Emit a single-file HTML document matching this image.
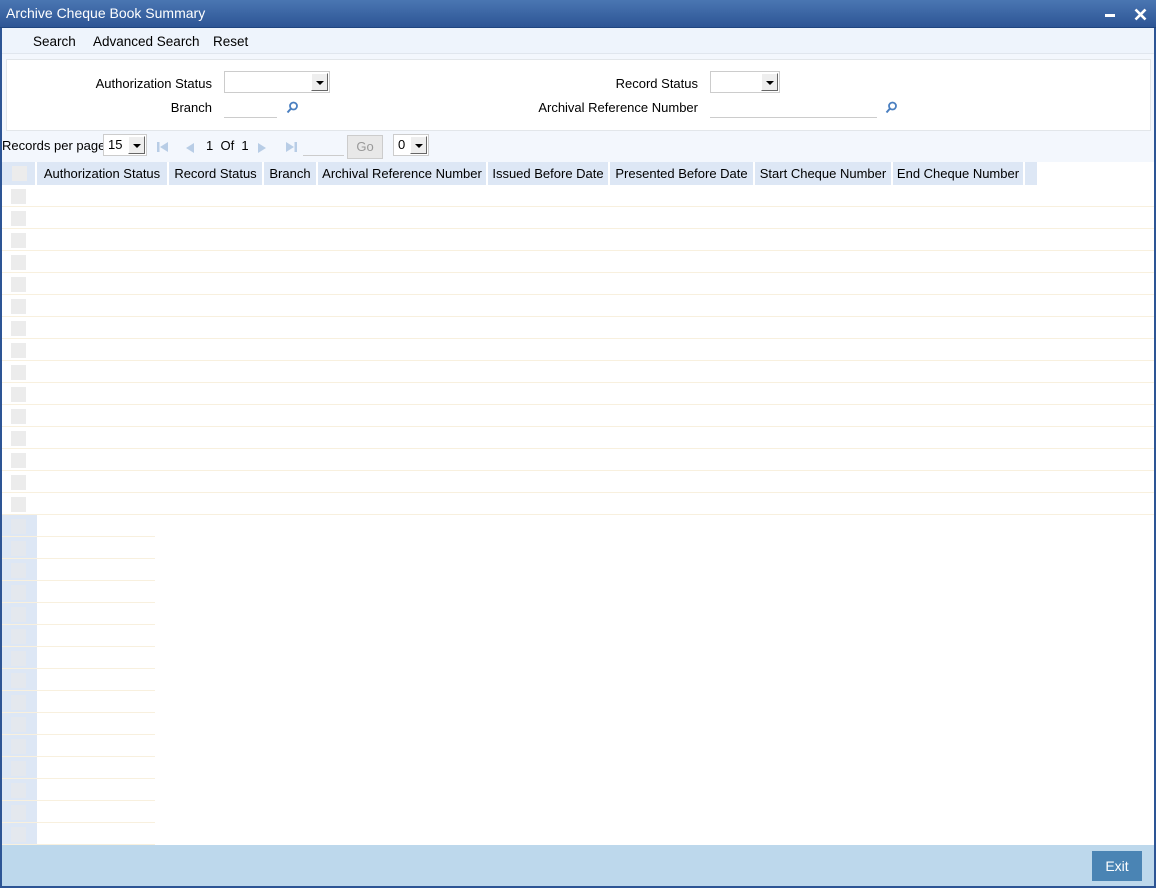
<!DOCTYPE html>
<html><head><meta charset="utf-8"><style>
*{margin:0;padding:0;box-sizing:border-box}
body{width:1156px;height:888px;position:relative;background:#fff;font-family:"Liberation Sans",Arial,sans-serif;font-size:13px;color:#000;overflow:hidden}
.a{position:absolute}
.t{white-space:nowrap}
.sel{position:absolute;height:22px;border:1px solid #ccc;background:#fff}
.sel i{position:absolute;right:1px;top:1px;width:17px;height:18px;background:#eee;border:1px solid #999;border-color:#fff #666 #666 #fff}
.sel i:after{content:"";position:absolute;left:4px;top:7px;border-left:4px solid transparent;border-right:4px solid transparent;border-top:4px solid #000}
.line{position:absolute;height:1px;background:#ccc}
.hd{position:absolute;top:162px;height:23px;background:#dde7f5;border-right:2px solid #fff;line-height:23px;text-align:center;overflow:hidden}
.cb{position:absolute;width:15px;height:15px;background:#ececec}
</style></head><body>
<div class="a" style="left:0;top:0;width:1156px;height:28px;background:linear-gradient(#4a76b2,#2d5595);border-bottom:1px solid #1f4580"></div>
<div class="a t" style="left:6px;top:5px;color:#fff;font-size:14px">Archive Cheque Book Summary</div>
<div class="a" style="left:1105px;top:14px;width:10px;height:3px;background:#fff"></div>
<svg class="a" style="left:1134px;top:8px" width="13" height="13"><path d="M1.5 1.5L11.5 11.5M11.5 1.5L1.5 11.5" stroke="#fff" stroke-width="2.6"/></svg>
<div class="a" style="left:0;top:28px;width:2px;height:860px;background:#2d5595"></div>
<div class="a" style="left:1154px;top:28px;width:2px;height:860px;background:#2d5595"></div>
<div class="a" style="left:2px;top:28px;width:1152px;height:26px;background:#eef4fc;border-bottom:1px solid #e0e6ee"></div>
<div class="a t" style="left:33px;top:34px;font-size:13.5px">Search</div>
<div class="a t" style="left:93px;top:34px;font-size:13.5px">Advanced Search</div>
<div class="a t" style="left:213px;top:34px;font-size:13.5px">Reset</div>
<div class="a" style="left:2px;top:54px;width:1152px;height:108px;background:#f3f7fd"></div>
<div class="a" style="left:6px;top:59px;width:1145px;height:72px;background:#fff;border:1px solid #e2e6ea"></div>
<div class="a t" style="left:94px;top:76px;width:118px;text-align:right">Authorization Status</div>
<div class="sel" style="left:224px;top:71px;width:106px"><i></i></div>
<div class="a t" style="left:112px;top:100px;width:100px;text-align:right">Branch</div>
<div class="line" style="left:224px;top:117px;width:53px"></div>
<svg class="a" style="left:286px;top:101px" width="13" height="13"><circle cx="7.5" cy="5" r="3.5" fill="none" stroke="#4a7fc0" stroke-width="1.8"/><path d="M5 7.5L1.5 11.5" stroke="#4a7fc0" stroke-width="2"/></svg>
<div class="a t" style="left:560px;top:76px;width:138px;text-align:right">Record Status</div>
<div class="sel" style="left:710px;top:71px;width:70px"><i></i></div>
<div class="a t" style="left:520px;top:100px;width:178px;text-align:right">Archival Reference Number</div>
<div class="line" style="left:710px;top:117px;width:167px"></div>
<svg class="a" style="left:885px;top:101px" width="13" height="13"><circle cx="7.5" cy="5" r="3.5" fill="none" stroke="#4a7fc0" stroke-width="1.8"/><path d="M5 7.5L1.5 11.5" stroke="#4a7fc0" stroke-width="2"/></svg>
<div class="a t" style="left:2px;top:138px">Records per page</div>
<div class="sel" style="left:103px;top:134px;width:44px"><i></i><span style="position:absolute;left:4px;top:2px">15</span></div>
<svg class="a" style="left:157px;top:141px" width="12" height="12"><rect x="0" y="1" width="2.5" height="10" fill="#b8cde6"/><path d="M11 1L3 6L11 11Z" fill="#b8cde6"/></svg>
<svg class="a" style="left:185px;top:143px" width="10" height="10"><path d="M9 0L1 5L9 10Z" fill="#b8cde6"/></svg>
<div class="a t" style="left:206px;top:138px">1 &nbsp;Of &nbsp;1</div>
<svg class="a" style="left:257px;top:143px" width="10" height="10"><path d="M1 0L9 5L1 10Z" fill="#b8cde6"/></svg>
<svg class="a" style="left:285px;top:141px" width="12" height="12"><path d="M1 1L9 6L1 11Z" fill="#b8cde6"/><rect x="9.5" y="1" width="2.5" height="10" fill="#b8cde6"/></svg>
<div class="line" style="left:303px;top:155px;width:41px"></div>
<div class="a" style="left:347px;top:135px;width:36px;height:24px;background:#e8e8e8;border:1px solid #ccc;color:#999;text-align:center;line-height:22px">Go</div>
<div class="sel" style="left:393px;top:134px;width:36px"><i></i><span style="position:absolute;left:4px;top:2px">0</span></div>
<div class="hd" style="left:2px;width:35px"><span class="cb" style="left:10px;top:4px"></span></div>
<div class="hd t" style="left:37px;width:132px">Authorization Status</div>
<div class="hd t" style="left:169px;width:95px">Record Status</div>
<div class="hd t" style="left:264px;width:54px">Branch</div>
<div class="hd t" style="left:318px;width:170px">Archival Reference Number</div>
<div class="hd t" style="left:488px;width:122px">Issued Before Date</div>
<div class="hd t" style="left:610px;width:145px">Presented Before Date</div>
<div class="hd t" style="left:755px;width:138px">Start Cheque Number</div>
<div class="hd t" style="left:893px;width:132px">End Cheque Number</div>
<div class="hd" style="left:1025px;width:14px"></div>
<div id="rows"></div>
<script>
var h='';
for(var i=0;i<15;i++){var y=185+22*i;h+='<div class="cb" style="left:11px;top:'+(y+4)+'px"></div><div class="a" style="left:2px;top:'+(y+21)+'px;width:1152px;height:1px;background:#f8f0de"></div>';}
for(var i=0;i<15;i++){var y=515+22*i;h+='<div class="a" style="left:2px;top:'+y+'px;width:35px;height:22px;background:#dde7f5"></div><div class="cb" style="left:11px;top:'+(y+4)+'px;background:#e4e8ee"></div><div class="a" style="left:2px;top:'+(y+21)+'px;width:153px;height:1px;background:#f8f0de"></div>';}
document.getElementById('rows').innerHTML=h;
</script>
<div class="a" style="left:2px;top:845px;width:1152px;height:41px;background:#bdd8ec"></div>
<div class="a" style="left:0;top:886px;width:1156px;height:2px;background:#2d5595"></div>
<div class="a" style="left:1092px;top:851px;width:50px;height:30px;background:#4a84b4;color:#fff;text-align:center;line-height:30px;font-size:14px">Exit</div>
</body></html>
